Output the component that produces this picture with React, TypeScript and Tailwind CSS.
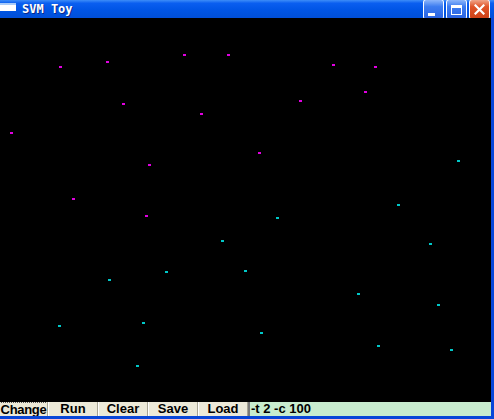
import React from 'react';

// SVM Toy: 두 클래스 점을 찍는 캔버스 + 하단 버튼/파라미터 입력줄

type Pt = [number, number];

const MAGENTA: Pt[] = [
    [59, 66], [106, 61], [183, 54], [227, 54], [332, 64], [374, 66], [364, 91],
    [299, 100], [122, 103], [200, 113], [10, 132], [258, 152], [148, 164],
    [72, 198], [145, 215],
];

const CYAN: Pt[] = [
    [457, 160], [397, 204], [276, 217], [221, 240], [429, 243], [165, 271],
    [244, 270], [108, 279], [357, 293], [437, 304], [58, 325], [142, 322],
    [260, 332], [377, 345], [450, 349], [136, 365],
];

const BUTTONS = ['Change', 'Run', 'Clear', 'Save', 'Load'];

function TitleButton({ kind }: { kind: 'min' | 'max' | 'close' }) {
    const bg =
        kind === 'close'
            ? 'bg-[linear-gradient(180deg,#f0a58a_0%,#e0552a_35%,#cc3f14_100%)]'
            : 'bg-[linear-gradient(180deg,#8cb6fb_0%,#3c7cf0_35%,#2a62e0_100%)]';
    return (
        <div className={`w-[21px] h-[21px] mt-[1px] rounded-[3px] border border-white flex items-center justify-center ${bg}`}>
            {kind === 'min' && <div className="w-[7px] h-[3px] bg-white mt-[9px] mr-[4px]" />}
            {kind === 'max' && <div className="w-[11px] h-[10px] border border-white border-t-[3px]" />}
            {kind === 'close' && (
                <svg width="11" height="11" viewBox="0 0 11 11">
                    <path d="M1.5 1.5 L9.5 9.5 M9.5 1.5 L1.5 9.5" stroke="white" strokeWidth="2.2" strokeLinecap="square" />
                </svg>
            )}
        </div>
    );
}

export default function App() {
    return (
        <div className="w-[494px] h-[419px] overflow-hidden flex flex-col bg-[#0050d8]">
            {/* 타이틀 바 */}
            <div className="h-[18px] flex items-start overflow-hidden bg-[linear-gradient(180deg,#3d8df8_0%,#0a5ef0_18%,#0055e5_55%,#004fd8_100%)]">
                <div className="w-[16px] h-[8px] mt-[3px] bg-white border-t-2 border-[#a9cbf8]" />
                <span
                    className="ml-[6px] mt-[2px] text-white text-[12px] leading-[14px] font-bold [text-shadow:1px_1px_0_#0a2a8a]"
                    style={{ fontFamily: '"DejaVu Sans Mono", "Liberation Mono", monospace' }}
                >
                    SVM&nbsp;Toy
                </span>
                <div className="ml-auto flex gap-[2px] mr-[4px] -mt-[2px]">
                    <TitleButton kind="min" />
                    <TitleButton kind="max" />
                    <TitleButton kind="close" />
                </div>
            </div>

            <div className="flex flex-1">
                <div className="w-[491px] flex flex-col">
                    {/* 점 캔버스 */}
                    <div className="relative flex-1 bg-black">
                        {MAGENTA.map(([x, y], i) => (
                            <div key={`m${i}`} className="absolute w-[3px] h-[2px] bg-[#e000e0]" style={{ left: x, top: y - 18 }} />
                        ))}
                        {CYAN.map(([x, y], i) => (
                            <div key={`c${i}`} className="absolute w-[3px] h-[2px] bg-[#00c8c8]" style={{ left: x, top: y - 18 }} />
                        ))}
                    </div>

                    {/* 하단 컨트롤 */}
                    <div
                        className="h-[14px] flex text-[13px] leading-[14px] font-bold text-black overflow-hidden"
                        style={{ fontFamily: '"Liberation Sans", Arial, sans-serif' }}
                    >
                        {BUTTONS.map((b, i) => (
                            <div
                                key={b}
                                className={`${i === 0 ? 'w-[48px]' : 'w-[50px]'} h-[14px] bg-[#ece9d8] border-r border-r-[#a7a493] flex justify-center ${i === 0 ? '' : 'border-l border-white'}`}
                            >
                                <span className={i === 0 ? 'h-[14px] border-t border-dotted border-[#555] tracking-[-0.3px] whitespace-nowrap' : ''}>
                                    {b}
                                </span>
                            </div>
                        ))}
                        <div className="flex-1 h-[14px] bg-[#c8ecce] border-l-2 border-[#7a7a7a] pl-[1px]">
                            -t 2 -c 100
                        </div>
                    </div>
                </div>
                <div className="flex-1 bg-[#0846d8]" />
            </div>
            <div className="h-[3px] bg-[#0846d8]" />
        </div>
    );
}
